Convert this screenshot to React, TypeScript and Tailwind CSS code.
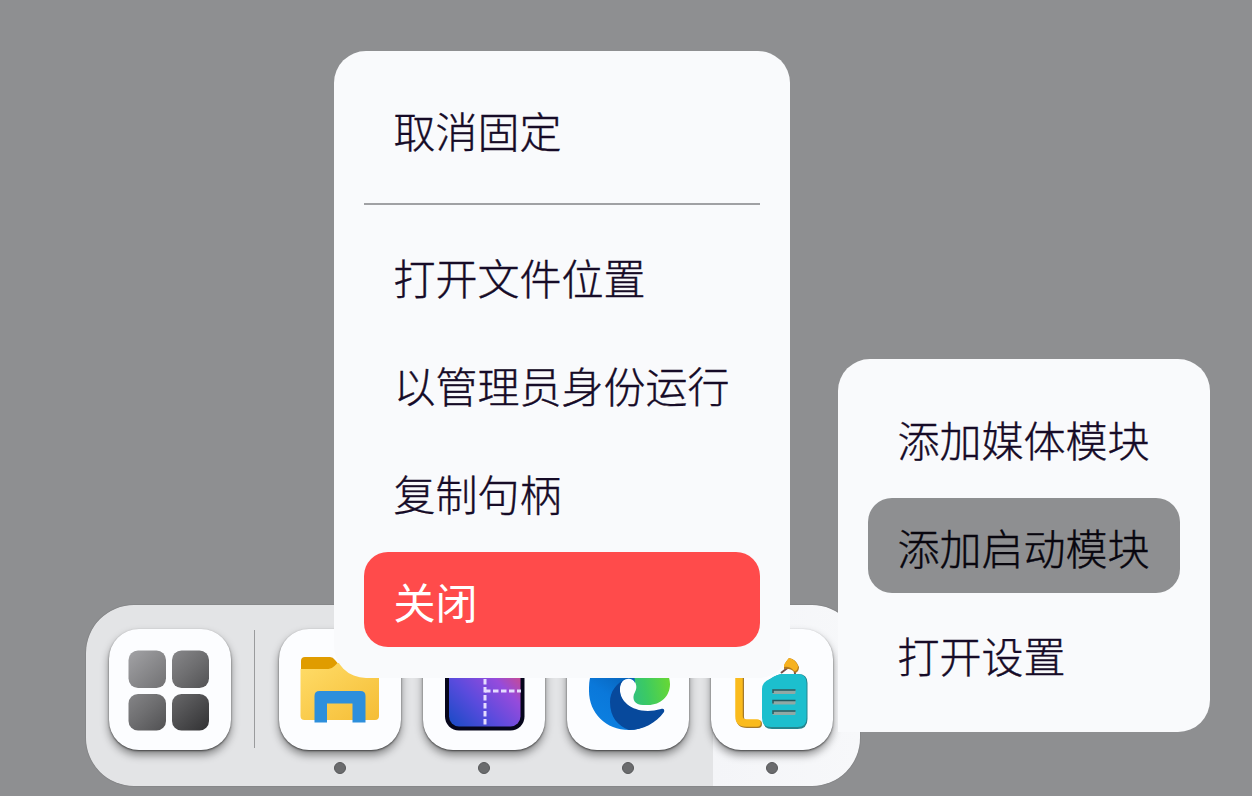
import type { ReactNode } from "react";

function LaunchpadIcon() {
  return (
    <svg viewBox="0 0 122 121" className="h-full w-full">
      <defs>
        <linearGradient id="pad" gradientUnits="userSpaceOnUse" x1="22" y1="20" x2="98" y2="101">
          <stop offset="0" stopColor="#a2a2a5" />
          <stop offset="0.5" stopColor="#6e6e70" />
          <stop offset="1" stopColor="#333335" />
        </linearGradient>
      </defs>
      <g fill="url(#pad)">
        <rect x="19.500" y="21.500" width="37.500" height="37.500" rx="9.500" />
        <rect x="63" y="21.500" width="37" height="37.500" rx="9.500" />
        <rect x="19.500" y="65" width="37.500" height="36.500" rx="9.500" />
        <rect x="63" y="65" width="37" height="36.500" rx="9.500" />
      </g>
    </svg>
  );
}

function FolderIcon() {
  return (
    <svg viewBox="0 0 122 121" className="h-full w-full">
      <defs>
        <linearGradient id="folder" x1="0" y1="0" x2="1" y2="1">
          <stop offset="0" stopColor="#ffdc68" />
          <stop offset="1" stopColor="#f5bd35" />
        </linearGradient>
      </defs>
      <path d="M22 32q0-4 4-4h25q3 0 5 3l6 7h34q4 0 4 4v20H22z" fill="#e09c00" />
      <path d="M21.500 40h28q3 0 6-3l3-3H96q4 0 4 4v49q0 4-4 4H25.500q-4 0-4-4z" fill="url(#folder)" />
      <path d="M35.500 93.500V67q0-5 5-5h41q5 0 5 5v26.500H73.500V74.500H48v19z" fill="#2d8fdc" />
    </svg>
  );
}

function ScreenGridIcon() {
  return (
    <svg viewBox="0 0 122 121" className="h-full w-full">
      <defs>
        <linearGradient id="screen" x1="0" y1="1" x2="1" y2="0">
          <stop offset="0" stopColor="#174bc5" />
          <stop offset="0.350" stopColor="#594bdd" />
          <stop offset="0.650" stopColor="#954bdc" />
          <stop offset="1" stopColor="#f04b58" />
        </linearGradient>
      </defs>
      <rect x="22" y="21" width="79.500" height="80.500" rx="14" fill="#06061c" />
      <rect x="26" y="25" width="71.500" height="72.500" rx="10" fill="url(#screen)" />
      <path d="M62 26v71" stroke="#e5dcff" strokeWidth="3" strokeDasharray="5.500 2.500" />
      <path d="M62 62h36" stroke="#e5dcff" strokeWidth="3" strokeDasharray="5.500 2.500" />
    </svg>
  );
}

function EdgeIcon() {
  return (
    <svg viewBox="0 0 122 121" className="h-full w-full">
      <defs>
        <linearGradient id="edgeGreen" gradientUnits="userSpaceOnUse" x1="62" y1="60" x2="103" y2="52">
          <stop offset="0" stopColor="#2fbf82" />
          <stop offset="0.400" stopColor="#3cca62" />
          <stop offset="1" stopColor="#68d834" />
        </linearGradient>
        <linearGradient id="edgeBlue" gradientUnits="userSpaceOnUse" x1="62" y1="42" x2="30" y2="90">
          <stop offset="0" stopColor="#0760b5" />
          <stop offset="0.550" stopColor="#0a78da" />
          <stop offset="1" stopColor="#0c7fe0" />
        </linearGradient>
      </defs>
      <path d="M60 24c25 0 43 14 43 31 0 12-9 21-22 21h-5c-8 0-12-6-8-13 3-5 1-12-5-14z" fill="url(#edgeGreen)" />
      <path d="M24 46C30 32 44 28 54 32c9 4 14 12 14 22-3-7-14-5-15 4-2 17 17 30 43 23-8 13-21 20-34 20-23 0-40-17-40-39 0-6 0-11 2-16z" fill="url(#edgeBlue)" />
      <path d="M60 49c-11 5-17 14-17 24 0 15 8 24 19 28 14 0 27-7 35-18 1-3-1-4-3-3-24 7-42-6-41-20 0-6 3-10 7-11z" fill="#07499c" />
    </svg>
  );
}

function NotesIcon() {
  return (
    <svg viewBox="0 0 122 121" className="h-full w-full">
      <path d="M28 42v45q0 7 7 7h11" fill="none" stroke="#a57a2c" strokeWidth="8" strokeLinecap="round" transform="translate(1 1)" />
      <path d="M28 42v45q0 7 7 7h11" fill="none" stroke="#fabb1d" strokeWidth="7.500" strokeLinecap="round" />
      <path d="M70 44q5-4 8-6 6-1 6 7" fill="none" stroke="#76504a" strokeWidth="2" />
      <path d="M73 35l5-6q7 1 10 9 0 5-4 6-4-5-11-4z" fill="#b47a1c" />
      <path d="M73 35l5-6q6 1 9 8 0 5-4 5-4-5-10-4z" fill="#f6b120" />
      <path d="M61 49q6-4 12-4h14q9.500 0 9.500 9v36q0 10-10 10H61q-9 0-9-9V61q0-8 9-12z" fill="#26858e" />
      <path d="M59 50q7-5 13-5h14q9.500 0 9.500 9v35q0 9-9 9H60q-9 0-9-9V60q0-7 8-10z" fill="#1cbfce" />
      <g fill="#8fa9a5">
        <rect x="61.500" y="60.500" width="23" height="4.500" rx="1" />
        <rect x="61.500" y="71" width="23" height="4.500" rx="1" />
        <rect x="61.500" y="81.500" width="23" height="4.500" rx="1" />
      </g>
      <path d="M62 64v-3h22.500M62 74.500v-3h22.500M62 85v-3h22.500" fill="none" stroke="#245a60" strokeWidth="1.500" />
    </svg>
  );
}

function DockTile({ children, running = true }: { children: ReactNode; running?: boolean }) {
  return (
    <div className="flex w-[122px] shrink-0 flex-col items-center">
      <div className="h-[121px] w-[122px] rounded-[30px] bg-[#fcfdff] shadow-[0_5px_9px_rgba(0,0,0,0.42),0_1px_2px_rgba(0,0,0,0.55)]">
        {children}
      </div>
      {running && <div className="mt-3 h-3 w-3 rounded-full border border-[#57585a] bg-[#6a6b6d]" />}
    </div>
  );
}

function MenuItem({ label, state = "" }: { label: string; state?: "" | "danger" | "active" }) {
  const look =
    state === "danger"
      ? "bg-[#ff4b4b] text-white font-normal"
      : state === "active"
        ? "bg-[#8e8f91] text-[#08060e] font-light [-webkit-text-stroke:0.4px]"
        : "text-[#160b27] font-light [-webkit-text-stroke:0.4px]";
  return (
    <div className={`flex h-[95px] shrink-0 items-center whitespace-nowrap rounded-[24px] pl-[29.5px] pt-[3px] text-[42px] leading-none ${look}`}>
      {label}
    </div>
  );
}

export default function App() {
  return (
    <main className="relative flex h-[796px] w-[1252px] items-end overflow-hidden bg-[#8e8f91] pb-[10px] pl-[86px] font-['Noto_Sans_CJK_SC',sans-serif]">
      <div className="flex h-[181px] w-[774px] items-start overflow-hidden rounded-[48px] bg-[linear-gradient(90deg,#e3e4e6_0px,#e3e4e6_627px,#f4f5f8_627px,#f7f8fa_774px)] pl-[23px] pt-[24px] shadow-[0_0_1px_rgba(0,0,0,0.5)]">
        <DockTile running={false}><LaunchpadIcon /></DockTile>
        <div className="ml-[23px] mr-6 mt-px h-[118px] w-px shrink-0 bg-[#9a9b9d]" />
        <div className="flex gap-[22px]">
          <DockTile><FolderIcon /></DockTile>
          <DockTile><ScreenGridIcon /></DockTile>
          <DockTile><EdgeIcon /></DockTile>
          <DockTile><NotesIcon /></DockTile>
        </div>
      </div>

      <div className="absolute left-[334px] top-[51px] flex h-[627px] w-[456px] flex-col rounded-[32px] bg-[#f9fafc] px-[30px] pt-[30px]">
        <MenuItem label="取消固定" />
        <div className="mb-[23px] mt-[27px] h-[2px] shrink-0 bg-[#a0a1a4]" />
        <div className="flex flex-col gap-[13px]">
          <MenuItem label="打开文件位置" />
          <MenuItem label="以管理员身份运行" />
          <MenuItem label="复制句柄" />
          <MenuItem label="关闭" state="danger" />
        </div>
      </div>

      <div className="absolute left-[838px] top-[359px] flex h-[373px] w-[372px] flex-col gap-[13px] rounded-[32px] rounded-bl-none bg-[#f9fafc] px-[30px] pt-[31px]">
        <MenuItem label="添加媒体模块" />
        <MenuItem label="添加启动模块" state="active" />
        <MenuItem label="打开设置" />
      </div>
    </main>
  );
}
